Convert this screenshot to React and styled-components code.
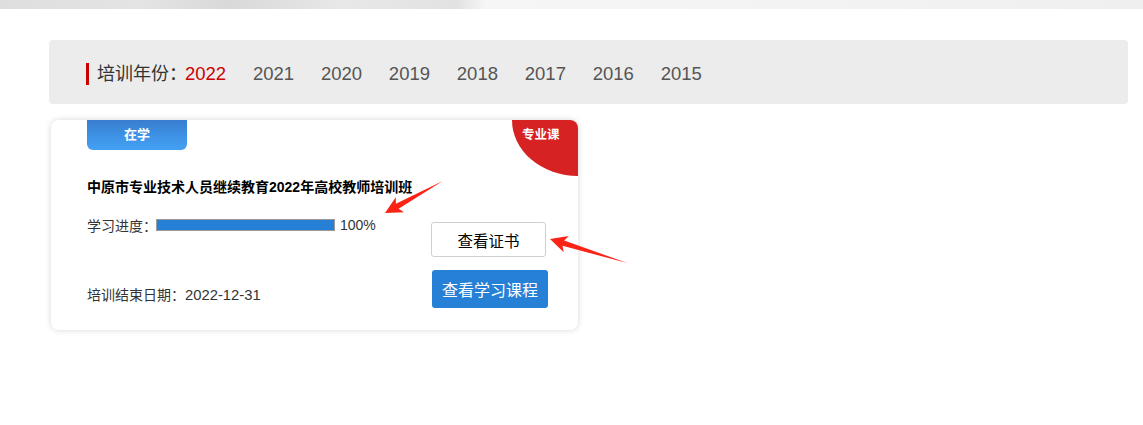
import React from "react";
import styled, { createGlobalStyle } from "styled-components";

const GlobalStyle = createGlobalStyle`
  html, body { margin: 0; padding: 0; background: #fff; }
  body {
    font-family: "Liberation Sans", "Noto Sans CJK SC", sans-serif;
    color: #333;
  }
`;

const Page = styled.div`
  position: relative;
  width: 1143px;
  min-height: 425px;
`;

const TopBand = styled.div`
  height: 9px;
  background: linear-gradient(
    90deg,
    #dedede 0%,
    #e4e4e4 12%,
    #d9d9d9 20%,
    #e8e8e8 30%,
    #e2e2e2 40%,
    #f6f6f6 42.5%,
    #f3f3f3 70%,
    #efefef 100%
  );
`;

const Content = styled.div`
  margin: 31px 0 0 49px;
  width: 1079px;
`;

const FilterBar = styled.div`
  height: 64px;
  box-sizing: border-box;
  padding: 4px 0 0 37px;
  background: #ececec;
  border-radius: 4px;
  display: flex;
  align-items: center;
`;

const Marker = styled.span`
  width: 3px;
  height: 22px;
  background: #c80000;
  margin-right: 8px;
`;

const FilterLabel = styled.span`
  font-size: 18px;
  color: #333;
  line-height: 22px;
  margin-right: -2px;
`;

const Year = styled.span`
  font-size: 18.5px;
  line-height: 22px;
  color: ${(p) => (p.$active ? "#cc0000" : "#555")};
  margin-right: 26.8px;
  cursor: pointer;
`;

const Card = styled.div`
  position: relative;
  margin: 16px 0 0 2px;
  width: 527px;
  box-sizing: border-box;
  padding: 0 30px 22px 36px;
  background: #fff;
  border-radius: 8px;
  box-shadow: 0 0 6px rgba(0, 0, 0, 0.16);
  overflow: hidden;
`;

const StatusTag = styled.div`
  width: 100px;
  height: 30px;
  line-height: 30px;
  text-align: center;
  color: #fff;
  font-size: 13px;
  font-weight: bold;
  background: linear-gradient(180deg, #387dcf 0%, #3f95e8 60%, #44a0f3 100%);
  border-radius: 0 0 6px 6px;
`;

const Corner = styled.div`
  position: absolute;
  top: 0;
  right: 0;
  width: 66px;
  height: 56px;
  box-sizing: border-box;
  padding: 8px 0 0 10px;
  background: #d62222;
  border-bottom-left-radius: 100%;
  color: #fff;
  font-size: 12.5px;
  font-weight: bold;
  line-height: 14px;
`;

const Title = styled.div`
  margin-top: 28px;
  font-size: 14px;
  font-weight: bold;
  line-height: 18px;
  color: #000;
`;

const Body = styled.div`
  margin-top: 19px;
  display: flex;
  justify-content: space-between;
`;

const InfoCol = styled.div`
  display: flex;
  flex-direction: column;
  justify-content: space-between;
  padding-bottom: 3px;
`;

const ProgressRow = styled.div`
  display: flex;
  align-items: center;
  height: 20px;
  font-size: 14px;
  color: #333;
`;

const Track = styled.div`
  width: 179px;
  height: 12px;
  box-sizing: border-box;
  border: 1px solid #9a9a9a;
  background: #fff;
  margin: 0 5px 0 -1px;
`;

const Fill = styled.div`
  height: 100%;
  background: #2680d6;
`;

const DateLine = styled.div`
  font-size: 14px;
  line-height: 20px;
  color: #333;
`;

const DateValue = styled.span`
  font-size: 14.8px;
`;

const ActionCol = styled.div`
  display: flex;
  flex-direction: column;
  align-items: flex-end;
  gap: 13px;
  padding-top: 7px;
`;

const Button = styled.button`
  width: ${(p) => (p.$primary ? "116px" : "115px")};
  height: ${(p) => (p.$primary ? "38px" : "35px")};
  margin-right: ${(p) => (p.$primary ? "0" : "2px")};
  box-sizing: border-box;
  font-family: inherit;
  font-size: ${(p) => (p.$primary ? "16px" : "15.5px")};
  color: ${(p) => (p.$primary ? "#fff" : "#000")};
  background: ${(p) => (p.$primary ? "#2680d6" : "#fff")};
  border: ${(p) => (p.$primary ? "none" : "1px solid #cfcfcf")};
  border-radius: 3px;
  cursor: pointer;
  padding: 0;
`;

const Annotations = styled.svg`
  position: absolute;
  left: 0;
  top: 0;
  pointer-events: none;
`;

const arrowPoints = (L) =>
  `0,0 17,-8.5 14,-2.8 ${L},0 14,2.8 17,8.5`;

const years = ["2022", "2021", "2020", "2019", "2018", "2017", "2016", "2015"];

export default function App() {
  const progress = 100;
  return (
    <Page>
      <GlobalStyle />
      <TopBand />
      <Content>
        <FilterBar>
          <Marker />
          <FilterLabel>培训年份：</FilterLabel>
          {years.map((y, i) => (
            <Year key={y} $active={i === 0}>
              {y}
            </Year>
          ))}
        </FilterBar>
        <Card>
          <StatusTag>在学</StatusTag>
          <Corner>专业课</Corner>
          <Title>中原市专业技术人员继续教育2022年高校教师培训班</Title>
          <Body>
            <InfoCol>
              <ProgressRow>
                学习进度：
                <Track>
                  <Fill style={{ width: `${progress}%` }} />
                </Track>
                {progress}%
              </ProgressRow>
              <DateLine>
                培训结束日期：<DateValue>2022-12-31</DateValue>
              </DateLine>
            </InfoCol>
            <ActionCol>
              <Button>查看证书</Button>
              <Button $primary>查看学习课程</Button>
            </ActionCol>
          </Body>
        </Card>
      </Content>
      <Annotations width="1143" height="425" viewBox="0 0 1143 425">
        <polygon
          points={arrowPoints(66)}
          fill="#fb2316"
          transform="translate(385 213) rotate(-28.9)"
        />
        <polygon
          points={arrowPoints(81)}
          fill="#fb2316"
          transform="translate(550 239) rotate(17.3)"
        />
      </Annotations>
    </Page>
  );
}
